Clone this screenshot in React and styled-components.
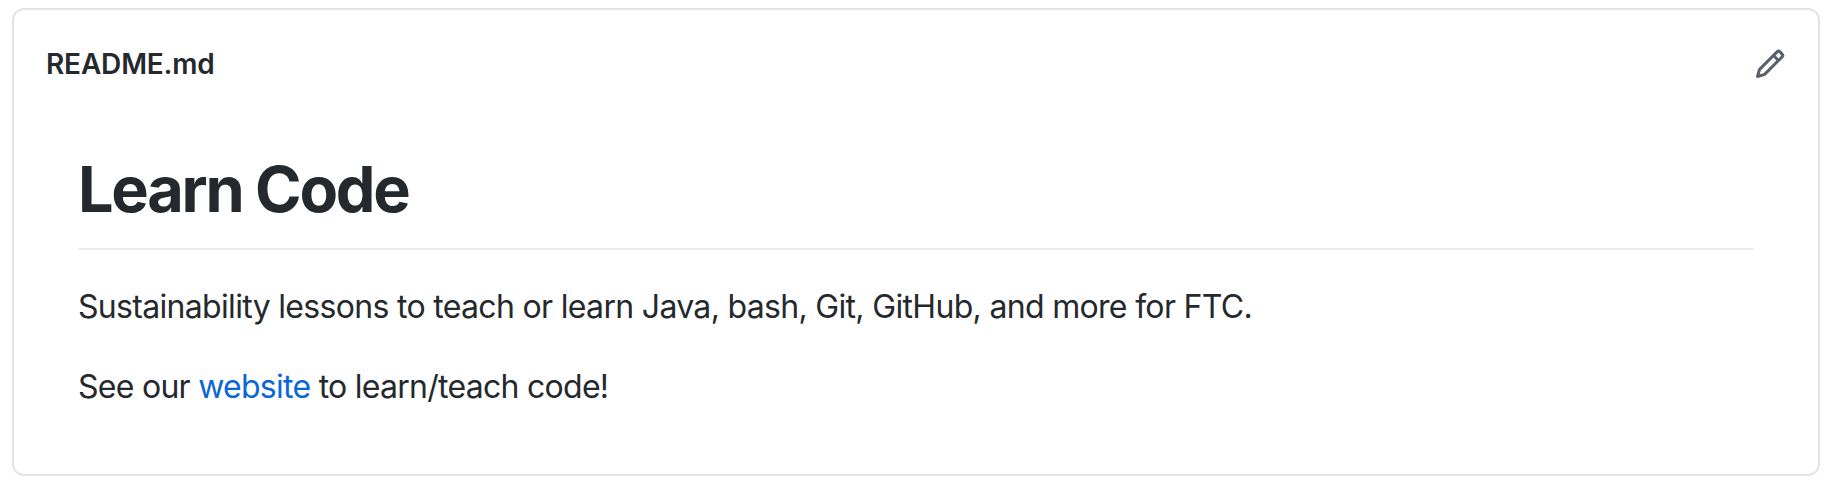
import React from 'react';
import styled, { createGlobalStyle } from 'styled-components';

const GlobalStyle = createGlobalStyle`
  * { box-sizing: border-box; }
  body { margin: 0; background: #fff; color: #24292e; font-family: Inter, "Liberation Sans", sans-serif; }
`;

const Page = styled.main`
  height: 488px;
  padding: 8px 8px 12px 12px;
`;

const Card = styled.section`
  height: 100%;
  border: 2px solid #e1e4e8;
  border-radius: 12px;
  background: #fff;
`;

const Header = styled.header`
  display: flex;
  align-items: center;
  justify-content: space-between;
  height: 108px;
  padding: 0 32px;
`;

const FileName = styled.span`
  display: block;
  font-size: 28px;
  line-height: 42px;
  font-weight: 600;
  white-space: nowrap;
  letter-spacing: -0.17px;
`;

const EditIcon = styled.svg`
  width: 32px;
  height: 32px;
  fill: #586069;
`;

const Article = styled.article`
  padding: 31px 64px 0;
`;

const Title = styled.h1`
  margin: 0 0 33px;
  padding-bottom: 19px;
  border-bottom: 2px solid #eaecef;
  font-size: 63px;
  line-height: 80px;
  font-weight: 700;
  letter-spacing: -2.25px;
`;

const Paragraph = styled.p`
  margin: 0 0 32px;
  font-size: 32px;
  line-height: 48px;
  letter-spacing: ${p => p.$tracking};
  white-space: nowrap;
`;

const Link = styled.a`
  color: #0b66d8;
  text-decoration: none;
`;

export default function App() {
  return (
    <Page>
      <GlobalStyle />
      <Card>
        <Header>
          <FileName>README.md</FileName>
          <EditIcon viewBox="0 0 16 16" aria-label="Edit README">
            <path fillRule="evenodd" d="M11.013 1.427a1.75 1.75 0 0 1 2.474 0l1.086 1.086a1.75 1.75 0 0 1 0 2.474l-8.61 8.61c-.21.21-.47.364-.756.445l-3.251.93a.75.75 0 0 1-.927-.928l.929-3.25a1.75 1.75 0 0 1 .445-.758l8.61-8.61Zm1.414 1.06a.25.25 0 0 0-.354 0L10.811 3.75l1.439 1.44 1.263-1.263a.25.25 0 0 0 0-.354l-1.086-1.086ZM11.189 6.25 9.75 4.81l-6.286 6.287a.25.25 0 0 0-.064.108l-.558 1.953 1.953-.558a.249.249 0 0 0 .108-.064l6.286-6.286Z" />
          </EditIcon>
        </Header>
        <Article>
          <Title>Learn Code</Title>
          <Paragraph $tracking="-0.68px">Sustainability lessons to teach or learn Java, bash, Git, GitHub, and more for FTC.</Paragraph>
          <Paragraph $tracking="-0.73px">See our <Link href="#">website</Link> to learn/teach code!</Paragraph>
        </Article>
      </Card>
    </Page>
  );
}
